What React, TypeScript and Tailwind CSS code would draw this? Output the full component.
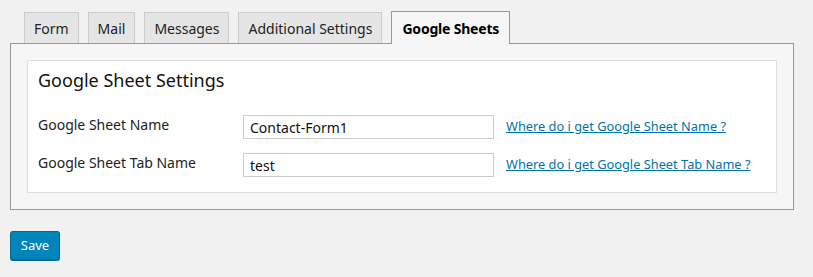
const tabs = ["Form", "Mail", "Messages", "Additional Settings"];

const rows = [
  { label: "Google Sheet Name", value: "Contact-Form1", help: "Where do i get Google Sheet Name ?" },
  { label: "Google Sheet Tab Name", value: "test", help: "Where do i get Google Sheet Tab Name ?" },
];

export default function App() {
  return (
    <div className="min-h-[277px] bg-[#f1f1f1] px-[10px] pt-[11px] text-[#222] font-['Noto_Sans',sans-serif]">
      <div className="flex items-end gap-[9px] pl-[14px]">
        {tabs.map((t) => (
          <div
            key={t}
            className="h-[31px] px-[9px] flex items-center border border-[#ccc] border-b-0 bg-[#e5e5e5] text-[14px] text-[#222]"
          >
            {t}
          </div>
        ))}
        <div className="relative z-10 -mb-px h-[33px] px-[10px] flex items-center border border-[#999] border-b-0 bg-[#f6f6f6] text-[14px] tracking-[-0.2px] font-bold text-black">
          Google Sheets
        </div>
      </div>
      <div className="w-[784px] border border-[#999] bg-[#f6f6f6] p-[16px]">
        <div className="border border-[#ddd] bg-white px-[10px] pt-[6px] pb-[15px]">
          <h2 className="text-[18px] leading-[26px] text-[#111]">Google Sheet Settings</h2>
          <div className="mt-[22px] flex flex-col gap-[14px]">
            {rows.map((r) => (
              <div key={r.label} className="flex items-center">
                <div className="w-[205px] text-[14px] leading-[20px] -mt-[5px]">{r.label}</div>
                <div className="w-[251px] h-[24px] border border-[#ccc] bg-white px-[6px] flex items-center text-[14px] text-[#111]">
                  {r.value}
                </div>
                <a href="#" className="ml-[12px] text-[12.8px] text-[#0073aa] underline">
                  {r.help}
                </a>
              </div>
            ))}
          </div>
        </div>
      </div>
      <button className="mt-[21px] h-[30px] w-[50px] rounded-[3px] border border-[#006799] border-b-[2px] bg-[#0085ba] text-[13px] text-white">
        Save
      </button>
    </div>
  );
}
